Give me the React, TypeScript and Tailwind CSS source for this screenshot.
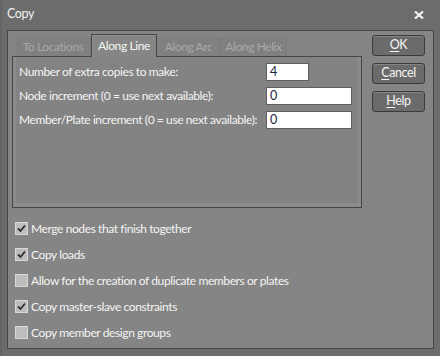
import React from "react";

const fields = [
  { label: "Number of extra copies to make:", value: "4", w: "w-[43px]" },
  { label: "Node increment (0 = use next available):", value: "0", w: "w-[86px]" },
  { label: "Member/Plate increment (0 = use next available):", value: "0", w: "w-[86px]" },
];

const options = [
  { label: "Merge nodes that finish together", checked: true },
  { label: "Copy loads", checked: true },
  { label: "Allow for the creation of duplicate members or plates", checked: false },
  { label: "Copy master-slave constraints", checked: true },
  { label: "Copy member design groups", checked: false },
];

const tabs = ["To Locations", "Along Line", "Along Arc", "Along Helix"];

const Check = ({ checked }: { checked: boolean }) => (
  <div className="w-[13px] h-[13px] border border-[#d9d9d9] bg-[#bdbdbd] flex items-center justify-center shrink-0">
    {checked && (
      <svg width="9" height="9" viewBox="0 0 9 9">
        <path d="M1 4.5 L3.5 7 L8 1.5" fill="none" stroke="#2e2e2e" strokeWidth="1.8" />
      </svg>
    )}
  </div>
);

const Btn = ({ first, rest }: { first: string; rest: string }) => (
  <button className="w-[53px] h-[21px] rounded-[3px] border border-[#3b3b3b] bg-[#6b6b6b] shadow-[inset_0_1px_0_#858585] text-[12.5px] text-[#f4f4f4] leading-none">
    <span className="underline underline-offset-2">{first}</span>
    {rest}
  </button>
);

export default function App() {
  return (
    <div
      className="w-[440px] h-[356px] bg-[#6c6c6c] border-l-2 border-[#656565] flex flex-col text-[12px] tracking-[-0.4px]"
      style={{ fontFamily: 'Lato, "Noto Sans", sans-serif' }}
    >
      {/* title bar */}
      <div className="h-[30px] flex items-center justify-between pl-[5px] pr-[16px] pb-[1px]">
        <span className="text-[12.5px] text-[#f2f2f2]">Copy</span>
        <svg width="10" height="8" viewBox="0 0 10 8">
          <path d="M1 0.5 L9 7.5 M9 0.5 L1 7.5" stroke="#f4f4f4" strokeWidth="2.2" />
        </svg>
      </div>

      {/* client area */}
      <div className="ml-[5px] w-[427px] h-[319px] border border-[#454545] bg-[#858585] flex flex-col">
        <div className="flex pl-[4px] pt-[2px]">
          {/* tab control */}
          <div className="w-[350px] flex flex-col">
            <div className="flex items-end h-[23px] pl-[4px]">
              {tabs.map((t) =>
                t === "Along Line" ? (
                  <div
                    key={t}
                    className="h-[23px] w-[66px] -mb-[1px] relative z-10 border border-b-0 border-[#454545] bg-[#868686] shadow-[inset_1px_1px_0_#8f8f8f] flex items-center justify-center text-[#f6f6f6]"
                  >
                    {t}
                  </div>
                ) : (
                  <div
                    key={t}
                    className={`h-[19px] ${t === "To Locations" ? "w-[75px]" : t === "Along Arc" ? "w-[64px]" : "w-[66px]"} bg-[#808080] border-r border-[#7a7a7a] flex items-center justify-center text-[#a9a9a9]`}
                  >
                    {t}
                  </div>
                )
              )}
            </div>
            <div className="h-[152px] border border-[#454545] bg-[#838383] shadow-[inset_3px_0_0_#8b8b8b,inset_-3px_0_0_#8b8b8b,inset_0_-4px_0_#8b8b8b] pt-[6px] pl-[6px] flex flex-col gap-[6px]">
              {fields.map((f) => (
                <div key={f.label} className="flex items-center h-[18px]">
                  <span className="w-[247px] text-[#f4f4f4] whitespace-nowrap">{f.label}</span>
                  <div className={`${f.w} h-[18px] bg-white border border-[#5e5e5e] text-[12.5px] text-[#1e1e3c] pl-[3px] leading-[16px]`}>
                    {f.value}
                  </div>
                </div>
              ))}
            </div>
          </div>

          {/* buttons */}
          <div className="ml-[10px] pt-[2px] flex flex-col gap-[7px]">
            <Btn first="O" rest="K" />
            <Btn first="C" rest="ancel" />
            <Btn first="H" rest="elp" />
          </div>
        </div>

        {/* options */}
        <div className="pl-[7px] pt-[14px] flex flex-col gap-[13px]">
          {options.map((o) => (
            <div key={o.label} className="flex items-center gap-[3px] h-[13px]">
              <Check checked={o.checked} />
              <span className="text-[#f4f4f4] whitespace-nowrap">{o.label}</span>
            </div>
          ))}
        </div>
      </div>
    </div>
  );
}
